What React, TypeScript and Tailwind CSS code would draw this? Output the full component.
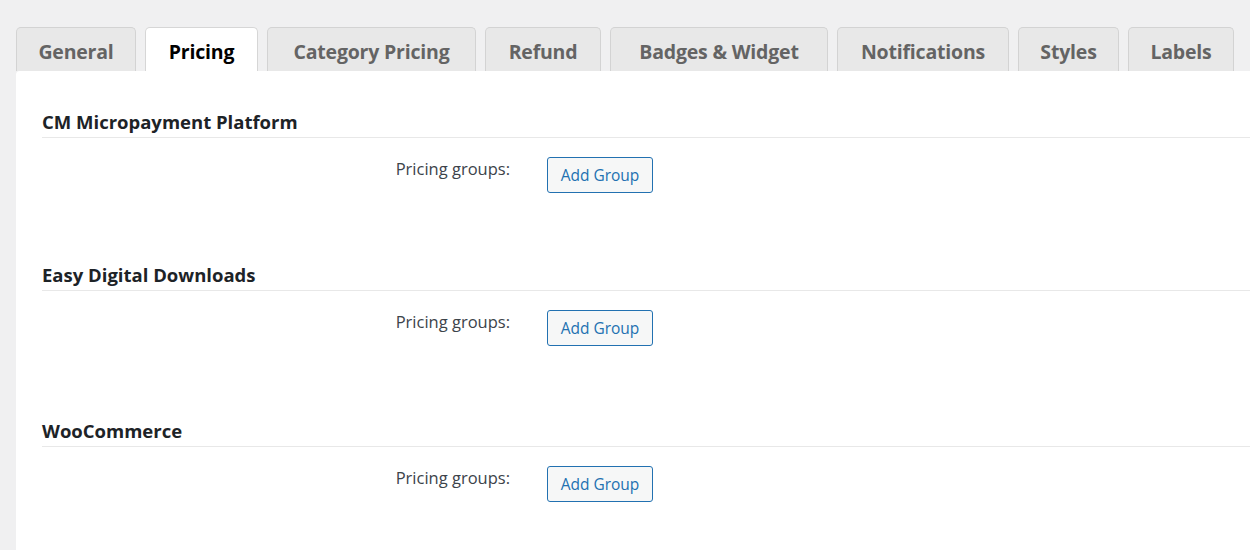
import React from 'react';

interface Tab {
  label: string;
  width: string;
}

const tabs: Tab[] = [
  { label: 'General', width: 'w-[120px]' },
  { label: 'Pricing', width: 'w-[113px]' },
  { label: 'Category Pricing', width: 'w-[209px]' },
  { label: 'Refund', width: 'w-[116px]' },
  { label: 'Badges & Widget', width: 'w-[218px]' },
  { label: 'Notifications', width: 'w-[172px]' },
  { label: 'Styles', width: 'w-[101px]' },
  { label: 'Labels', width: 'w-[106px]' },
];

const sections = [
  { title: 'CM Micropayment Platform', spacing: 'pt-[39px]' },
  { title: 'Easy Digital Downloads', spacing: 'pt-[70px]' },
  { title: 'WooCommerce', spacing: 'pt-[73px]' },
];

const App: React.FC = () => {
  const active = 'Pricing';

  return (
    <div className="min-h-[550px] w-[1250px] overflow-hidden bg-[#f0f0f1] font-['Open_Sans',sans-serif]">
      {/* Tabs */}
      <div className="flex gap-[9px] pl-[16px] pt-[27px]">
        {tabs.map((tab) => (
          <div
            key={tab.label}
            className={`${tab.width} h-[44px] flex items-center justify-center pt-[5px] rounded-t-[5px] border border-b-0 text-[19.5px] font-bold tracking-[-0.2px] ${
              tab.label === active
                ? 'bg-white border-[#d6d6d6] text-black'
                : 'bg-[#e8e8e8] border-[#d3d3d3] text-[#646464]'
            }`}
          >
            {tab.label}
          </div>
        ))}
      </div>

      {/* Panel */}
      <div className="ml-[16px] min-h-[479px] rounded-tl-[4px] bg-white pl-[26px] pb-10">
        {sections.map((section) => (
          <div key={section.title} className={section.spacing}>
            <h2 className="border-b border-[#e8e8e8] pb-[3px] text-[18.5px] leading-[24px] font-bold text-[#1d2327]">
              {section.title}
            </h2>
            <div className="mt-[19px] flex items-start">
              <div className="w-[468px] text-right text-[16.5px] leading-[24px] text-[#3c434a]">
                Pricing groups:
              </div>
              <button className="ml-[37px] h-[36px] w-[106px] rounded-[3px] border border-[#2271b1] bg-[#f6f7f7] pt-[2px] text-[15.5px] text-[#2271b1]">
                Add Group
              </button>
            </div>
          </div>
        ))}
      </div>
    </div>
  );
};

export default App;
